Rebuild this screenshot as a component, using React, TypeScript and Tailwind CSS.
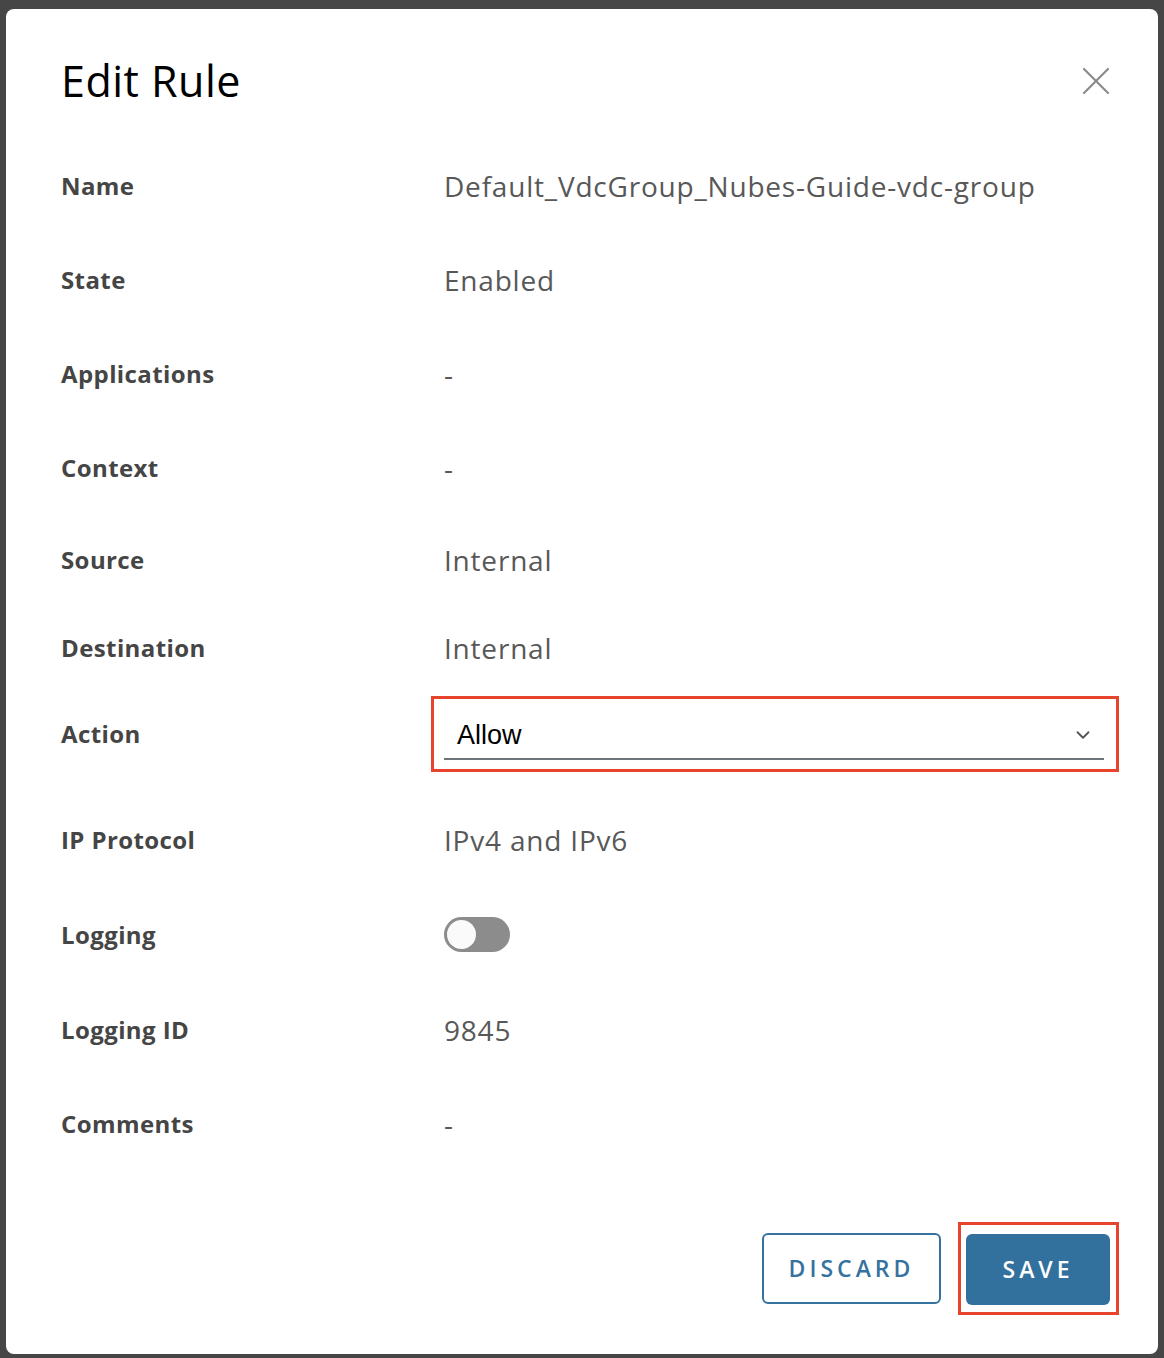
import { X, ChevronDown } from 'lucide-react';

const FONT = { fontFamily: '"Open Sans", "Liberation Sans", sans-serif' };

interface Row {
  label: string;
  value?: string;
  kind?: 'text' | 'select' | 'toggle';
  h: string;
}

// heights tuned so each row's centre sits on the reference
const ROWS: Row[] = [
  { label: 'Name', value: 'Default_VdcGroup_Nubes-Guide-vdc-group', h: 'h-[94px]' },
  { label: 'State', value: 'Enabled', h: 'h-[94px]' },
  { label: 'Applications', value: '-', h: 'h-[94px]' },
  { label: 'Context', value: '-', h: 'h-[94px]' },
  { label: 'Source', value: 'Internal', h: 'h-[90px]' },
  { label: 'Destination', value: 'Internal', h: 'h-[86px]' },
  { label: 'Action', kind: 'select', h: 'h-[92px] pb-[6px]' },
  { label: 'IP Protocol', value: 'IPv4 and IPv6', h: 'h-[104px] pt-[10px]' },
  { label: 'Logging', kind: 'toggle', h: 'h-[95px]' },
  { label: 'Logging ID', value: '9845', h: 'h-[95px]' },
  { label: 'Comments', value: '-', h: 'h-[94px]' },
];

function Value({ row }: { row: Row }) {
  if (row.kind === 'select') {
    return (
      <div className="-ml-[13px] w-[688px] h-[76px] border-[3px] border-[#e8432c] pl-[10px] pr-[12px] pt-[19px]">
        <div className="flex items-center justify-between border-b-2 border-[#6b7478] pl-[13px] pr-[10px] pb-[6px]">
          <span className="text-[27px] leading-[34px] text-black" style={{ fontFamily: '"Liberation Sans", Arial, sans-serif' }}>
            Allow
          </span>
          <ChevronDown className="w-[22px] h-[22px] text-[#555]" strokeWidth={2} />
        </div>
      </div>
    );
  }
  if (row.kind === 'toggle') {
    return (
      <div className="w-[66px] h-[35px] rounded-full bg-[#8c8c8c] flex items-center pl-[3px]">
        <div className="w-[29px] h-[29px] rounded-full bg-[#fafafa]" />
      </div>
    );
  }
  return <span className="text-[28px] tracking-[0.8px] text-[#585858]">{row.value}</span>;
}

export default function App() {
  return (
    <div className="min-h-[1358px] w-full bg-[#464646] pt-[9px] pl-[6px]" style={FONT}>
      <div className="w-[1152px] h-[1345px] bg-white rounded-[8px] flex flex-col">
        <div className="h-[130px] pt-[14px] pl-[55px] pr-[38px] flex items-center justify-between">
          <h2 className="text-[43px] text-black tracking-[0.5px]">Edit Rule</h2>
          <X className="w-[48px] h-[48px] text-[#8a8a8a]" strokeWidth={1.1} />
        </div>

        <div className="pl-[55px] flex flex-col">
          {ROWS.map((row) => (
            <div key={row.label} className={`flex items-center ${row.h}`}>
              <div className="w-[383px] text-[24px] font-bold tracking-[0.4px] text-[#454545]">{row.label}</div>
              <Value row={row} />
            </div>
          ))}
        </div>

        <div className="mt-[51px] flex items-center justify-end pr-[39px] gap-[17px]">
          <button className="w-[179px] h-[71px] rounded-[6px] border-2 border-[#3572a0] text-[#3572a0] text-[23px] font-semibold tracking-[4px]">
            DISCARD
          </button>
          <div className="border-[3px] border-[#e8432c] pl-[5px] pr-[6px] pt-[9px] pb-[7px]">
            <button className="w-[144px] h-[71px] rounded-[6px] bg-[#32709e] text-white text-[23px] font-semibold tracking-[4px]">
              SAVE
            </button>
          </div>
        </div>
      </div>
    </div>
  );
}
